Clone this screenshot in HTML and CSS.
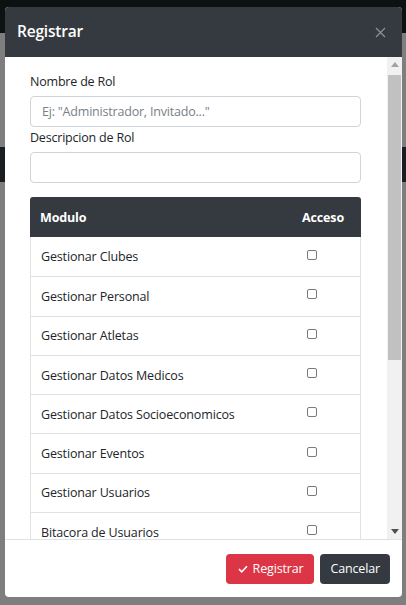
FILE: index.html
```html
<!DOCTYPE html>
<html lang="es">
<head>
<meta charset="utf-8">
<title>Registrar</title>
<link rel="stylesheet" href="styles.css">
</head>
<body>
<div class="page">
  <div class="navbar"></div>
  <div class="page-content">
    <div class="bg-band"></div>
  </div>
</div>
<div class="modal">
  <div class="modal-header">
    <h5 class="modal-title">Registrar</h5>
    <span class="close"><svg width="11" height="11" viewBox="0 0 11 11"><path d="M1 1 L10 10 M10 1 L1 10" stroke="#8d9297" stroke-width="1.2" fill="none"/></svg></span>
  </div>
  <div class="modal-body">
    <div class="body-content">
      <label class="form-label">Nombre de Rol</label>
      <input class="form-control" type="text" placeholder='Ej: "Administrador, Invitado..."'>
      <label class="form-label">Descripcion de Rol</label>
      <input class="form-control" type="text">
      <table class="perm-table">
        <thead>
          <tr><th class="col-mod">Modulo</th><th class="col-acc">Acceso</th></tr>
        </thead>
        <tbody>
          <tr><td>Gestionar Clubes</td><td class="chk"><input type="checkbox" class="cb"></td></tr>
          <tr><td>Gestionar Personal</td><td class="chk"><input type="checkbox" class="cb"></td></tr>
          <tr><td>Gestionar Atletas</td><td class="chk"><input type="checkbox" class="cb"></td></tr>
          <tr><td>Gestionar Datos Medicos</td><td class="chk"><input type="checkbox" class="cb"></td></tr>
          <tr><td>Gestionar Datos Socioeconomicos</td><td class="chk"><input type="checkbox" class="cb"></td></tr>
          <tr><td>Gestionar Eventos</td><td class="chk"><input type="checkbox" class="cb"></td></tr>
          <tr><td>Gestionar Usuarios</td><td class="chk"><input type="checkbox" class="cb"></td></tr>
          <tr class="cut"><td>Bitacora de Usuarios</td><td class="chk"><input type="checkbox" class="cb"></td></tr>
        </tbody>
      </table>
    </div>
    <div class="scrollbar">
      <div class="sb-arrow"><svg width="8" height="5" viewBox="0 0 8 5"><path d="M0 5 L4 0 L8 5 Z" fill="#a3a3a3"/></svg></div>
      <div class="sb-track"><div class="sb-thumb"></div></div>
      <div class="sb-arrow"><svg width="8" height="5" viewBox="0 0 8 5"><path d="M0 0 L8 0 L4 5 Z" fill="#505050"/></svg></div>
    </div>
  </div>
  <div class="modal-footer">
    <button class="btn btn-danger"><svg width="10" height="8" viewBox="0 0 10 8"><path d="M1 4.2 L3.7 6.8 L9 1.2" stroke="#fff" stroke-width="1.6" fill="none"/></svg>Registrar</button>
    <button class="btn btn-dark">Cancelar</button>
  </div>
</div>
</body>
</html>
```
FILE: styles.css
```css
* { box-sizing: border-box; }
html, body { margin: 0; padding: 0; }
body {
  width: 406px;
  height: 605px;
  overflow: hidden;
  font-family: "Open Sans", "Noto Sans", sans-serif;
  font-size: 12.5px;
  letter-spacing: -0.15px;
  color: #212529;
  background: #7e7e7e;
}
.page { height: 605px; display: flex; flex-direction: column; }
.navbar { height: 33px; background: #0d1112; flex: none; }
.page-content { flex: 1; background: #7e7e7e; padding-top: 114px; }
.bg-band { height: 35px; background: #1b1e21; }

.modal {
  position: absolute;
  left: 5px;
  top: 7px;
  width: 397px;
  height: 590px;
  background: #fff;
  border-radius: 4px;
  overflow: hidden;
  display: flex;
  flex-direction: column;
}
.modal-header {
  height: 50px;
  flex: none;
  background: #343a40;
  display: flex;
  align-items: center;
  justify-content: space-between;
  padding: 0 16px 0 12px;
}
.modal-title {
  margin: 0;
  color: #fff;
  font-size: 15.5px;
  font-weight: 600;
  letter-spacing: -0.2px;
  line-height: 1;
}
.close { display: flex; width: 11px; height: 11px; }

.modal-body {
  flex: 1;
  min-height: 0;
  display: flex;
  overflow: hidden;
}
.body-content {
  flex: 1;
  min-width: 0;
  padding: 15px 26px 0 25px;
  overflow: hidden;
}
.form-label {
  display: block;
  line-height: 19px;
  margin-bottom: 5px;
  font-size: 12.5px;
  letter-spacing: -0.2px;
}
.form-control {
  display: block;
  width: 100%;
  height: 31px;
  margin: 0 0 1px;
  padding: 0 11px;
  border: 1px solid #ced4da;
  border-radius: 4px;
  font-family: inherit;
  font-size: 12.5px;
  letter-spacing: -0.2px;
  color: #495057;
  background: #fff;
}
.form-control::placeholder { color: #7a8086; }
.perm-table {
  width: 100%;
  margin-top: 14px;
  border-collapse: separate;
  border-spacing: 0;
}
.perm-table th {
  height: 40px;
  background: #343a40;
  color: #fff;
  font-weight: 700;
  font-size: 12.5px;
  padding: 0 10px;
  text-align: left;
}
.perm-table th:first-child { border-top-left-radius: 3px; }
.perm-table th:last-child { border-top-right-radius: 3px; }
.perm-table .col-acc { text-align: right; padding-right: 17px; width: 90px; }
.perm-table tbody tr { height: 39.3px; }
.perm-table td {
  padding: 0 10px;
  border-top: 1px solid #dee2e6;
  vertical-align: middle;
}
.perm-table td:first-child { border-left: 1px solid #dee2e6; }
.perm-table td:last-child { border-right: 1px solid #dee2e6; }
.perm-table tbody tr:first-child td { border-top: none; }
.perm-table td.chk { padding: 0 0 0 36px; }
.cb {
  -webkit-appearance: none;
  appearance: none;
  display: block;
  width: 10px;
  height: 10px;
  margin: 0 0 4px;
  border: 1px solid #7a7a7a;
  border-radius: 2px;
  background: #fff;
}

.scrollbar {
  width: 15px;
  flex: none;
  background: #f1f1f1;
  display: flex;
  flex-direction: column;
}
.sb-arrow {
  height: 15px;
  display: flex;
  align-items: center;
  justify-content: center;
  flex: none;
}
.sb-track { flex: 1; padding: 3px 1px 0 1px; }
.sb-thumb { height: 285px; background: #c1c1c1; }

.modal-footer {
  height: 58px;
  flex: none;
  border-top: 1px solid #dee2e6;
  display: flex;
  align-items: center;
  justify-content: flex-end;
  gap: 6px;
  padding: 0 12px 0 0;
}
.btn {
  height: 30px;
  border: none;
  border-radius: 4px;
  color: #fff;
  font-family: inherit;
  font-size: 12.5px;
  letter-spacing: -0.15px;
  padding: 0 11px;
  display: flex;
  align-items: center;
  gap: 5px;
}
.btn-danger { background: #dc3545; padding-left: 12px; }
.btn-dark { background: #343a40; padding: 0 10px; }
```
